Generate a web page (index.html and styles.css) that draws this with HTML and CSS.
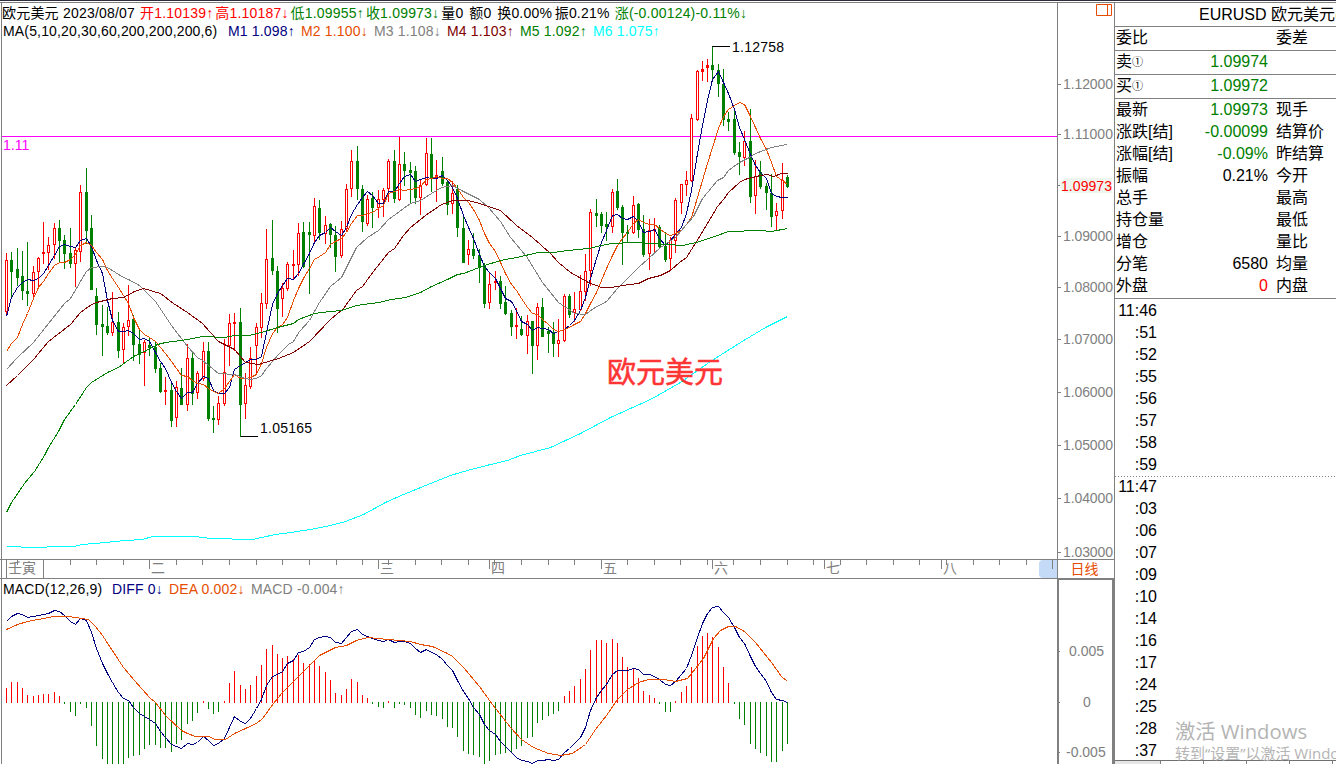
FILE: index.html
```html
<!DOCTYPE html>
<html lang="zh-CN">
<head>
<meta charset="utf-8">
<title>EURUSD 欧元美元</title>
<link rel="stylesheet" href="styles.css">
</head>
<body>
<div class="app">
  <main class="charts">
    <section class="price-pane">
      <svg class="plot" id="price" width="1057" height="556" viewBox="0 3 1057 556"></svg>
      <div class="legend">
        <div class="legend-row quote">
          <span class="c-name">欧元美元</span><span class="c-date">2023/08/07</span><span class="c-ohlc red">开1.10139↑</span><span class="c-ohlc red">高1.10187↓</span><span class="c-ohlc green">低1.09955↑</span><span class="c-ohlc green">收1.09973↓</span><span class="c-vol">量0</span><span class="c-vol">额0</span><span class="c-pct">换0.00%</span><span class="c-amp">振0.21%</span><span class="green">涨(-0.00124)-0.11%↓</span>
        </div>
        <div class="legend-row averages">
          <span class="c-ma">MA(5,10,20,30,60,200,200,200,6)</span><span class="c-m navy">M1 1.098↑</span><span class="c-m orange">M2 1.100↓</span><span class="c-m gray">M3 1.108↓</span><span class="c-m maroon">M4 1.103↑</span><span class="c-m green">M5 1.092↑</span><span class="c-m cyan">M6 1.075↑</span>
        </div>
      </div>
    </section>
    <aside class="scale">
      <svg id="scale" width="56" height="556" viewBox="1058 3 56 556"></svg>
    </aside>
    <div class="ruler"><svg id="ruler" width="1057" height="18" viewBox="0 560 1057 18"></svg></div>
    <div class="period">日线</div>
    <section class="macd-pane">
      <svg class="plot" id="macd" width="1057" height="185" viewBox="0 579 1057 185"></svg>
      <div class="legend legend-row">
        <span class="c-macd">MACD(12,26,9)</span><span class="c-diff navy">DIFF 0↓</span><span class="c-dea orange">DEA 0.002↓</span><span class="gray">MACD -0.004↑</span>
      </div>
    </section>
    <aside class="macd-scale"><svg id="mscale" width="53" height="184" viewBox="1060 580 53 184"></svg></aside>
  </main>
  <aside class="side">
    <header class="symbol">EURUSD 欧元美元<span class="orange">(</span></header>
    <div class="row ruled"><span>委比</span><b></b><span>委差</span></div>
    <div class="row ruled"><span>卖<i>①</i></span><b class="green">1.09974</b><span></span></div>
    <div class="row ruled"><span>买<i>①</i></span><b class="green">1.09972</b><span></span></div>
    <div class="stats">
      <div class="row"><span>最新</span><b class="green">1.09973</b><span>现手</span></div>
      <div class="row"><span>涨跌[结]</span><b class="green">-0.00099</b><span>结算价</span></div>
      <div class="row"><span>涨幅[结]</span><b class="green">-0.09%</b><span>昨结算</span></div>
      <div class="row"><span>振幅</span><b>0.21%</b><span>今开</span></div>
      <div class="row"><span>总手</span><b></b><span>最高</span></div>
      <div class="row"><span>持仓量</span><b></b><span>最低</span></div>
      <div class="row"><span>增仓</span><b></b><span>量比</span></div>
      <div class="row"><span>分笔</span><b>6580</b><span>均量</span></div>
      <div class="row"><span>外盘</span><b class="red">0</b><span>内盘</span></div>
    </div>
    <ol class="ticks">
      <li>11:46</li><li>:51</li><li>:52</li><li>:55</li><li>:56</li><li>:57</li><li>:58</li><li>:59</li>
      <li class="minute">11:47</li><li>:03</li><li>:06</li><li>:07</li><li>:09</li><li>:10</li><li>:14</li><li>:16</li><li>:17</li><li>:24</li><li>:25</li><li>:28</li><li>:37</li>
    </ol>
    <div class="activate"><p class="big">激活 Windows</p><p class="small">转到“设置”以激活 Windows</p></div>
    <div class="tabs"><i class="on"></i><i></i><i></i><i></i><i></i></div>
  </aside>
</div>
<script src="chart.js"></script>
</body>
</html>
```
FILE: styles.css
```css
* { box-sizing: border-box; }
body { margin: 0; background: #fff; color: #000; font-family: "Liberation Sans", "Noto Sans CJK SC", sans-serif; }
svg { display: block; }
.app { width: 1336px; height: 764px; overflow: hidden; display: grid; grid-template-columns: 1114px 222px; border-top: 1px solid #2c2c3e; padding-top: 1px; }
.red { color: #f00; } .green { color: #008000; } .navy { color: #000080; } .orange { color: #e64d00; }
.gray { color: #808080; } .maroon { color: #800000; } .cyan { color: #0ff; }

.charts { display: grid; grid-template-columns: 1057px 57px; grid-template-rows: 556px 19px 186px; border-top: 1px solid #808080; height: 762px; }
.price-pane, .macd-pane { position: relative; }
.plot { shape-rendering: crispEdges; }
.legend { position: absolute; left: 2px; top: 1px; }
.legend-row { display: flex; font-size: 14px; letter-spacing: .16px; line-height: 18px; height: 18px; white-space: nowrap; }
.quote { letter-spacing: .2px; }
.macd-pane .legend { top: 1px; left: 3px; }
.c-name { width: 61px; } .c-date { width: 77px; } .c-ohlc { width: 75.3px; } .c-vol { width: 28px; }
.c-pct { width: 57.5px; } .c-amp { width: 60px; }
.averages { padding-left: 1px; }
.c-ma { width: 225px; } .c-m { width: 73px; }
.c-macd { width: 109px; } .c-diff { width: 57px; } .c-dea { width: 82px; }

.scale { border-left: 1px solid #808080; }
.ruler, .period { border-top: 1px solid #808080; }
.period { border-left: 1px solid #808080; color: #e64d00; font-size: 14px; line-height: 18px; text-align: center; padding-right: 3px; }
.macd-pane { border-top: 1px solid #808080; }
.macd-scale { border: 2px solid #808080; border-bottom: 0; }
#price text, #scale text, #mscale text, #ruler text { font-size: 14px; }
#scale text, #mscale text, #ruler text { fill: #808080; }
#scale .now { fill: #f00; }
#price .stamp { font-size: 29px; fill: #ff3434; stroke: #ff3434; stroke-width: .5px; }
#price .level { fill: #f0f; }
.ma { fill: none; stroke-width: 1; }

.side { position: relative; display: flex; flex-direction: column; border-left: 1px solid #808080; border-top: 1px solid #808080; font-size: 16px; height: 762px; overflow: hidden; white-space: nowrap; }
.symbol { height: 23px; line-height: 24px; padding-left: 84px; flex: none; }
.row { display: grid; grid-template-columns: 61px 91px 1fr; padding-left: 1px; line-height: 22px; height: 22px; }
.row span:last-child { padding-left: 8px; }
.row b { font-weight: normal; text-align: right; }
.row i { font-style: normal; font-size: 11px; vertical-align: 1px; }
.ruled { border-top: 1px solid #808080; height: 24px; line-height: 22px; flex: none; }
.stats { border-top: 1px solid #808080; height: 200px; flex: none; }
.ticks { list-style: none; margin: 0; padding: 1px 0 0; border-top: 1px solid #808080; height: 462px; flex: none; }
.ticks li { height: 22px; line-height: 22px; padding-right: 179px; text-align: right; }
.ticks .minute { background: linear-gradient(90deg, #808080 1px, transparent 1px) 0 0 / 3px 1px repeat-x; }
.activate { position: absolute; left: 60px; top: 715px; color: #b4b4b4; font-family: "Open Sans", "Noto Sans CJK SC", sans-serif; }
.activate p { margin: 0; }
.big { font-size: 20.3px; line-height: 26px; }
.small { font-size: 15px; line-height: 19px; }
.tabs { display: flex; height: 4px; flex: none; border-top: 1px solid #707070; }
.tabs i { width: 43px; border-right: 1px solid #808080; }
.tabs .on { width: 46px; background: #e6e6e6; }
```
FILE: chart.js
```js
const xs = i => Math.floor(6.46 + 5.312 * i);

// high, low, body top, body bottom, rising (1) or falling (0)
const candles = [
[253,315,260,311,1],[252,297,260,271,0],[248,285,269,277,0],[251,299,276,290,0],[242,305,291,293,0],[266,297,272,293,1],[257,286,258,271,1],[222,263,252,253,1],[237,269,245,252,1],[223,258,228,244,1],
[220,261,228,240,0],[235,268,240,253,0],[228,267,253,263,0],[248,286,250,263,1],[185,261,192,251,1],[168,243,192,230,0],[215,289,228,289,0],[288,334,296,324,0],[305,355,324,326,0],[307,334,326,332,0],
[292,335,322,332,1],[312,357,322,350,0],[323,362,327,349,1],[285,335,320,326,1],[315,360,319,344,0],[328,363,344,354,0],[340,385,342,352,1],[337,355,345,347,0],[341,372,347,368,0],[363,392,368,391,0],
[377,404,390,391,1],[383,426,390,420,0],[381,426,387,417,1],[368,404,388,404,0],[344,410,358,404,1],[353,404,358,393,0],[371,398,373,392,1],[342,380,351,378,1],[342,420,351,418,0],[406,432,418,419,0],
[396,424,403,419,1],[339,405,372,403,1],[314,365,323,345,1],[313,350,322,323,1],[308,436,322,404,0],[373,418,385,403,1],[347,388,358,386,1],[323,373,327,345,1],[293,337,303,327,1],[229,308,259,303,1],
[220,274,258,270,0],[266,332,271,308,0],[283,316,288,298,1],[262,290,264,288,1],[250,278,264,265,1],[223,275,233,264,1],[222,267,232,266,0],[222,293,232,234,0],[198,243,206,235,1],[200,239,208,232,0],
[216,243,225,233,1],[223,247,224,234,0],[226,271,235,256,0],[221,257,229,255,1],[184,231,189,228,1],[150,196,161,188,1],[146,199,161,188,0],[185,231,189,221,0],[195,225,199,223,1],[192,227,198,207,0],
[190,217,199,207,1],[188,216,190,199,1],[159,201,161,188,1],[150,202,161,198,0],[137,200,164,199,1],[152,185,164,170,0],[162,202,170,172,0],[166,203,171,197,0],[180,214,185,197,1],[138,185,153,184,1],
[138,191,154,177,0],[160,201,175,177,1],[157,185,171,183,0],[181,214,182,204,0],[181,213,193,203,1],[185,236,189,227,0],[217,262,228,262,0],[240,264,249,254,1],[233,258,249,255,0],[249,282,255,266,0],
[263,307,266,303,0],[272,308,284,302,1],[271,289,281,282,1],[276,308,281,303,0],[286,314,302,313,0],[310,335,313,326,0],[308,338,325,326,1],[316,335,329,334,0],[315,353,321,335,1],[321,373,321,345,0],
[303,359,307,345,1],[298,336,307,336,0],[327,352,331,333,0],[322,356,332,343,0],[319,356,340,343,1],[294,341,296,340,1],[294,317,296,314,0],[292,321,309,312,1],[275,310,291,309,1],[254,300,271,291,1],
[209,285,212,270,1],[199,226,213,215,0],[212,232,214,225,0],[212,240,224,226,0],[189,232,192,226,1],[179,209,191,207,0],[205,264,207,232,0],[225,242,232,233,0],[196,233,205,232,1],[203,237,204,229,0],
[215,256,229,254,0],[219,269,230,253,1],[218,251,229,230,1],[225,248,227,246,0],[232,261,246,259,0],[237,270,240,258,1],[198,252,200,240,1],[184,213,184,202,1],[171,195,180,184,1],[114,181,118,180,1],
[70,120,71,119,1],[61,80,69,71,1],[59,81,65,67,1],[46,79,65,69,0],[64,96,70,83,0],[69,125,84,119,0],[112,130,119,121,0],[110,154,119,152,0],[142,174,152,156,0],[131,165,141,157,1],
[109,202,141,196,0],[160,213,176,195,1],[161,188,172,186,0],[183,209,186,192,0],[174,226,193,216,0],[203,229,211,215,1],[163,218,180,210,1],[175,187,177,186,0]];

const m1 = [316,297,287,282,279,280,278,273,265,255,246,244,246,247,240,238,246,260,273,300,320,331,331,330,333,339,338,341,352,361,368,382,391,398,392,392,383,376,378,390,393,393,387,369,365,362,359,359,356,332,
304,293,285,278,279,273,264,253,242,235,232,227,231,235,227,214,204,197,191,195,203,203,191,191,183,176,174,181,179,177,178,178,175,180,187,198,215,227,238,254,266,272,278,288,298,301,310,321,324,330,327,328,329,333,331,329,325,320,310,297,278,258,242,230,215,214,218,219,216,221,232,231,229,238,245,240,234,227,213,190,153,125,100,79,71,82,93,109,127,139,154,165,172,178,193,196,197,197];
const m2 = [351,343,337,324,313,298,287,281,273,265,262,262,259,254,245,242,245,252,259,270,278,287,295,303,317,329,334,337,341,347,353,361,368,375,376,380,383,384,388,391,393,388,381,374,378,378,377,374,363,347,
333,327,324,317,300,288,278,268,259,256,252,244,241,238,232,223,215,215,213,212,208,205,193,191,189,190,189,188,186,179,178,176,178,178,182,188,197,202,209,220,233,243,251,262,273,284,290,298,307,313,314,319,324,329,331,329,327,324,321,313,303,292,280,268,255,245,238,232,223,219,222,224,224,228,233,235,233,230,224,217,197,180,163,147,128,116,109,105,102,104,116,127,138,149,162,176,180,184];
const m3 = "6,369 17,357 33,342 48,323 64,303 70,298 80,281 86,271 91,267 102,266 107,267 123,277 128,279 139,285 155,301 171,325 187,346 197,357 202,360 218,373 234,374 245,378 250,379 256,378 261,375 266,368 278,354 288,344 293,341 299,331 309,320 319,302 330,286 341,277 347,265 356,247 367,237 378,230 388,219 399,211 410,203 420,200 431,193 441,187 452,185 463,191 479,199 488,207 500,221 510,237 526,256 542,282 558,302 567,308 574,313 585,314 593,308 606,301 617,288 628,277 638,267 648,258 660,247 675,237 686,224 693,216 702,198 717,180 723,177 728,170 739,162 749,157 755,153 771,147 781,145 787,144";
const m4 = "6,385 17,375 33,359 48,341 70,324 80,312 91,304 96,302 112,298 123,297 134,291 143,288 160,293 173,303 187,312 202,323 218,341 234,349 245,362 258,364 271,360 278,358 293,352 309,341 330,319 343,308 356,290 362,286 373,271 388,252 394,248 403,235 410,227 425,215 441,204 452,200 468,200 479,203 500,210 516,225 532,237 550,253 558,262 570,272 588,282 601,287 611,287 622,285 638,283 648,278 660,275 670,270 679,262 686,257 696,241 707,223 717,206 723,199 728,192 739,182 744,179 760,175 767,174 773,176 781,173 787,173";
const m5 = "6,512 11,502 24,483 34,471 44,455 48,447 58,431 64,419 75,404 86,387 91,382 107,372 118,367 133,356 144,351 157,344 165,342 181,340 192,338 202,336 224,337 234,335 248,335 261,332 277,327 293,323 298,319 314,313 330,311 341,310 356,305 378,302 391,299 405,297 420,292 431,286 447,279 457,274 463,273 484,265 500,260 516,257 538,252 553,252 567,250 588,248 601,245 611,243 633,242 653,243 682,245 696,242 717,235 728,231 760,230 771,231 787,228";
const m6 = "6,546 20,546 21,547 46,547 47,546 73,546 82,544 105,542 125,540 142,539 152,536 195,536 210,538 252,539 275,534 290,532 310,529 330,525 345,521 363,514 385,502 403,494 430,483 450,475 467,470 490,464 507,460 520,455 550,447 580,433 610,417 650,399 680,382 710,361 740,342 765,327 787,316";
const diff = [621,616,613,614,617,616,615,614,613,610,611,615,621,624,618,620,632,648,663,673,682,692,698,700,707,713,716,719,723,731,737,744,746,748,743,744,742,736,740,745,743,738,727,716,721,723,718,708,699,685,
676,674,671,663,660,652,651,647,639,637,636,637,642,643,637,631,629,634,636,638,640,641,639,642,641,641,643,648,652,649,652,654,659,665,670,680,691,698,707,714,724,730,734,741,746,752,757,760,761,763,760,760,759,760,759,752,748,743,737,727,710,697,690,684,674,670,670,670,668,669,674,674,676,679,684,685,681,674,668,655,637,623,613,607,606,612,617,627,637,643,656,666,673,681,692,699,700,702];
const dea = "6,629 17,624 27,621 48,617 54,616 67,616 75,617 88,619 95,626 102,635 123,667 134,680 149,697 155,702 165,715 181,730 187,733 195,736 208,736 215,739 225,739 234,733 245,728 256,723 262,718 273,703 282,692 298,676 309,665 319,655 325,652 335,647 346,645 356,640 367,637 388,639 410,641 420,644 432,646 447,653 452,656 463,667 479,686 492,704 510,727 521,739 533,747 548,753 560,755 572,753 585,744 595,729 606,715 617,699 627,689 638,682 648,679 663,679 675,681 687,678 691,673 703,658 713,638 720,630 728,626 735,626 744,631 755,642 771,662 781,676 787,681";
const bars = [688,682,682,688,695,696,695,694,694,692,696,703,711,715,703,707,725,745,758,765,765,765,765,757,755,754,748,744,744,747,747,751,743,739,723,720,712,701,708,713,711,701,683,671,685,689,685,676,665,649,
645,654,658,656,659,655,663,664,661,666,672,680,693,695,689,679,682,695,698,703,706,707,701,707,703,704,707,714,717,710,714,715,718,726,727,736,750,753,754,756,763,760,754,753,752,752,748,745,737,736,722,719,715,713,710,696,691,686,679,669,650,640,640,643,639,643,657,667,669,678,691,695,698,703,711,711,701,692,686,667,646,636,633,637,647,667,683,703,718,724,743,748,752,755,761,761,750,743];

const RED = '#f00', GREEN = '#008000', GRAY = '#808080';
const rect = (x, y, w, h, f) => `<rect x="${x}" y="${y}" width="${w}" height="${h}" fill="${f}"/>`;
const text = (x, y, s, extra = '') => `<text x="${x}" y="${y}" ${extra}>${s}</text>`;
const series = ys => ys.map((y, i) => `${xs(i)},${y}`).join(' ');
const line = (pts, c) => `<polyline class="ma" transform="translate(.5 .5)" stroke="${c}" points="${pts}"/>`;
const put = (id, s) => { document.getElementById(id).innerHTML = s; };

let price = rect(1, 3, 1, 556, GRAY) + rect(2, 136, 1055, 1, '#f0f');
price += candles.map(([h, l, t, b, up], i) => {
  const x = xs(i), c = up ? RED : GREEN;
  let s = rect(x, h, 1, l - h + 1, c) + rect(x - 1, t, 3, Math.max(1, b - t + 1), c);
  if (up && b - t > 2) s += rect(x, t + 1, 1, b - t - 1, '#fff');
  return s;
}).join('');
price += line(series(m1), '#000080') + line(series(m2), '#e64d00') + line(m3, GRAY) + line(m4, '#800000') + line(m5, GREEN) + line(m6, '#0ff');
price += rect(712, 46, 18, 1, '#000') + rect(241, 436, 17, 1, '#000');
price += text(732, 52, '1.12758', 'textLength="52"') + text(260, 433, '1.05165', 'textLength="52"') + text(3, 150, '1.11', 'class="level"') + text(607, 383, '欧元美元', 'class="stamp"');
put('price', price);

const levels = [['1.12000', 84], ['1.11000', 134], ['1.09000', 236], ['1.08000', 287], ['1.07000', 339], ['1.06000', 392], ['1.05000', 445], ['1.04000', 498], ['1.03000', 552]];
put('scale', levels.map(([s, y]) => rect(1058, y, 3, 1, GRAY) + text(1063, y + 5, s, 'textLength="50"')).join('')
  + '<path d="M1058 185l7-7h47v15h-47z" fill="#edf5ed"/>' + rect(1058, 185, 2, 1, GRAY) + text(1061, 191, '1.09973', 'class="now" textLength="51"')
  + '<path d="M1096.500 4.500h15v11h-15zM1107.500 4.500v11" fill="none" stroke="#e64d00"/>');
put('mscale', [['0.005', 651, 1070], ['0', 702, 1084], ['-0.005', 752, 1067]].map(([s, y, x]) => rect(1060, y, 1, 1, GRAY) + text(x, y + 5, s)).join(''));

const minor = [70,96,123,176,202,229,256,282,309,336,362,388,415,441,468,494,521,548,574,627,654,680,707,733,760,787,813,840,866,893,919,946,973,999,1026];
const months = [['二', 149], ['三', 378], ['四', 489], ['五', 601], ['六', 712], ['七', 824], ['八', 941]];
put('ruler', rect(1, 560, 1, 18, GRAY) + '<rect x="1039" y="560" width="22" height="18" rx="4" fill="#c4dbf7"/>'
  + rect(6, 560, 1, 18, GRAY) + rect(43, 560, 1, 18, GRAY) + rect(17, 560, 1, 5, GRAY) + text(8, 573, '壬寅') + rect(1052, 560, 1, 9, GRAY)
  + minor.map(x => rect(x, 560, 1, 5, GRAY)).join('') + months.map(([s, x]) => rect(x, 560, 1, 9, GRAY) + text(x + 2, 573, s)).join(''));

put('macd', rect(1, 579, 1, 185, GRAY)
  + bars.map((y, i) => y < 702 ? rect(xs(i), y, 1, 703 - y, RED) : rect(xs(i), 702, 1, y - 701, GREEN)).join('')
  + line(series(diff), '#000080') + line(dea, '#e64d00'));
```
